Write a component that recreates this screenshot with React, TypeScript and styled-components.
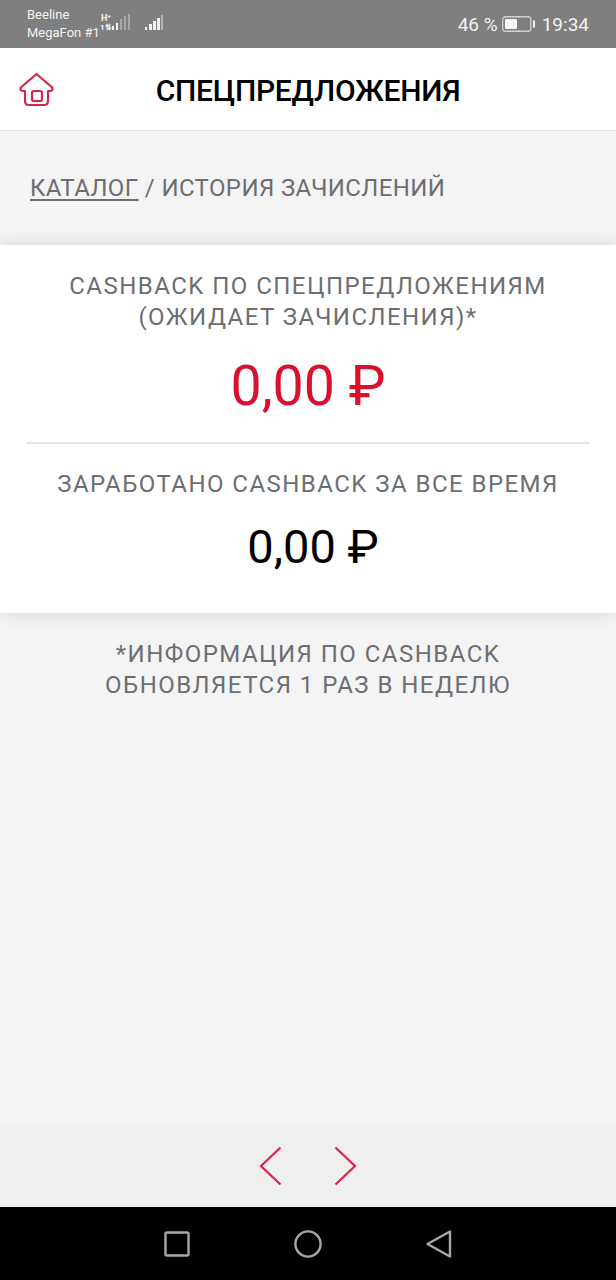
import React from "react";
import styled, { createGlobalStyle } from "styled-components";

const Global = createGlobalStyle`
  html, body { margin: 0; padding: 0; background: #f4f4f5; }
  * { box-sizing: border-box; }
`;

const Page = styled.div`
  width: 616px;
  height: 1280px;
  display: flex;
  flex-direction: column;
  font-family: Roboto, "Liberation Sans", sans-serif;
  background: #f4f4f5;
  overflow: hidden;
`;

const StatusBar = styled.div`
  height: 48px;
  flex: none;
  background: #7f7f7f;
  color: #f2f2f2;
  display: flex;
  align-items: center;
  padding: 0 27px 0 27px;
`;

const Carriers = styled.div`
  font-size: 13px;
  line-height: 18px;
  width: 73px;
  white-space: nowrap;
`;

const Signals = styled.div`
  display: flex;
  align-items: center;
  gap: 14px;
  margin-top: -2px;
`;

const StatusRight = styled.div`
  margin-left: auto;
  display: flex;
  align-items: center;
  font-size: 19px;
  color: #f2f2f2;
`;

const Battery = styled.svg`
  margin: 0 7px 0 4px;
`;

const Header = styled.header`
  height: 83px;
  flex: none;
  background: #fff;
  border-bottom: 1px solid #e6e6e6;
  position: relative;
  display: flex;
  align-items: center;
  justify-content: center;
  padding-top: 2px;
`;

const HomeIcon = styled.svg`
  position: absolute;
  left: 19px;
  top: 24px;
`;

const Title = styled.h1`
  margin: 0;
  font-size: 30px;
  font-weight: 500;
  color: #000;
  letter-spacing: -0.25px;
`;

const Breadcrumb = styled.nav`
  flex: none;
  height: 114px;
  padding: 41px 0 0 30px;
  font-size: 24px;
  line-height: 32px;
  letter-spacing: 0.39px;
  color: #6d6e71;
`;

const CrumbLink = styled.span`
  text-decoration: underline;
  text-underline-offset: 3px;
  text-decoration-thickness: 2px;
`;

const Card = styled.section`
  flex: none;
  height: 368px;
  background: #fff;
  box-shadow: 0 0 18px rgba(0, 0, 0, 0.13);
  display: flex;
  flex-direction: column;
  align-items: center;
  padding: 26px 26px 0;
`;

const Label = styled.div`
  font-size: 24px;
  line-height: 31px;
  letter-spacing: 1.46px;
  color: #6d6e71;
  text-align: center;
  white-space: nowrap;
`;

const Amount = styled.div<{ $red?: boolean; $size: number; $top: number; $shift?: number }>`
  font-size: ${(p) => p.$size}px;
  line-height: 1;
  margin-top: ${(p) => p.$top}px;
  padding-left: ${(p) => p.$shift ?? 0}px;
  color: ${(p) => (p.$red ? "#d8112f" : "#000")};
  white-space: nowrap;
`;

const Divider = styled.div`
  width: 100%;
  height: 2px;
  background: #e4e4e4;
  margin: 27px 0 25px;
`;

const Note = styled.p`
  margin: 0;
  padding-top: 26px;
  font-size: 24px;
  line-height: 31px;
  letter-spacing: 1.46px;
  color: #6d6e71;
  text-align: center;
`;

const Spacer = styled.div`
  flex: 1;
`;

const Pager = styled.div`
  height: 82px;
  flex: none;
  background: #efefef;
  display: flex;
  align-items: center;
  justify-content: center;
  gap: 50px;
`;

const NavBar = styled.div`
  height: 73px;
  flex: none;
  background: #000;
  display: flex;
  align-items: center;
  justify-content: center;
  gap: 104px;
`;

export default function App() {
  return (
    <Page>
      <Global />
      <StatusBar>
        <Carriers>
          Beeline
          <br />
          MegaFon #1
        </Carriers>
        <Signals>
          <svg width="30" height="20" viewBox="0 0 30 20">
            <g fill="#f2f2f2">
              <text x="1" y="8" fontSize="9" fontWeight="700" fontFamily="Roboto">H⁺</text>
              <text x="0" y="17" fontSize="8" fontWeight="700" fontFamily="Roboto">1⇅</text>
              <rect x="12" y="13" width="2" height="4" />
              <rect x="16" y="10" width="2" height="7" />
            </g>
            <g fill="#a9a9a9">
              <rect x="20" y="6" width="2" height="11" />
              <rect x="24" y="3" width="2" height="14" />
              <rect x="28" y="1" width="2" height="16" />
            </g>
          </svg>
          <svg width="20" height="20" viewBox="0 0 20 20">
            <g fill="#f2f2f2">
              <rect x="1" y="14" width="2" height="3" />
              <rect x="5" y="11" width="3" height="6" />
              <rect x="9" y="8" width="3" height="9" />
              <rect x="13" y="5" width="3" height="12" />
            </g>
            <rect x="17" y="2" width="2" height="15" fill="#b5b5b5" />
          </svg>
        </Signals>
        <StatusRight>
          46 %
          <Battery width="33" height="16" viewBox="0 0 33 16">
            <rect x="0.75" y="0.75" width="28" height="14.5" rx="2.5" fill="none" stroke="#cfcfcf" strokeWidth="1.3" />
            <rect x="3" y="3" width="12" height="10" rx="1" fill="#f4f4f4" />
            <rect x="31" y="4.5" width="2" height="7" fill="#f2f2f2" />
          </Battery>
          19:34
        </StatusRight>
      </StatusBar>
      <Header>
        <HomeIcon width="36" height="36" viewBox="0 0 36 36" fill="none" stroke="#d8234b" strokeWidth="2.2" strokeLinejoin="round" strokeLinecap="round">
          <path d="M1.8 15.5 L17.5 2 L33.2 15.5 Q34.5 18.8 31 19 L29 19 L29 29 Q29 33 25 33 L10 33 Q6 33 6 29 L6 19 L4 19 Q0.5 18.8 1.8 15.5 Z" />
          <rect x="13" y="19" width="10" height="10" rx="2" />
        </HomeIcon>
        <Title>СПЕЦПРЕДЛОЖЕНИЯ</Title>
      </Header>
      <Breadcrumb>
        <CrumbLink>КАТАЛОГ</CrumbLink> / ИСТОРИЯ ЗАЧИСЛЕНИЙ
      </Breadcrumb>
      <Card>
        <Label>
          CASHBACK ПО СПЕЦПРЕДЛОЖЕНИЯМ
          <br />
          (ОЖИДАЕТ ЗАЧИСЛЕНИЯ)*
        </Label>
        <Amount $red $size={55.5} $top={26}>0,00 ₽</Amount>
        <Divider />
        <Label>ЗАРАБОТАНО CASHBACK ЗА ВСЕ ВРЕМЯ</Label>
        <Amount $size={47} $top={23} $shift={10}>0,00 ₽</Amount>
      </Card>
      <Note>
        *ИНФОРМАЦИЯ ПО CASHBACK
        <br />
        ОБНОВЛЯЕТСЯ 1 РАЗ В НЕДЕЛЮ
      </Note>
      <Spacer />
      <Pager>
        <svg width="24" height="40" viewBox="0 0 24 40" fill="none" stroke="#d8234b" strokeWidth="2.2">
          <path d="M21.5 1.5 L2 20 L21.5 38.5" />
        </svg>
        <svg width="24" height="40" viewBox="0 0 24 40" fill="none" stroke="#d8234b" strokeWidth="2.2">
          <path d="M2.5 1.5 L22 20 L2.5 38.5" />
        </svg>
      </Pager>
      <NavBar>
        <svg width="26" height="26" viewBox="0 0 26 26" fill="none" stroke="#a8a8a8" strokeWidth="2.4">
          <rect x="1.5" y="1.5" width="23" height="23" rx="1.5" />
        </svg>
        <svg width="28" height="28" viewBox="0 0 28 28" fill="none" stroke="#a8a8a8" strokeWidth="2.4">
          <circle cx="14" cy="14" r="12.6" />
        </svg>
        <svg width="26" height="28" viewBox="0 0 26 28" fill="none" stroke="#a8a8a8" strokeWidth="2.4" strokeLinejoin="round">
          <path d="M24 1.5 L24 26.5 L1.5 14 Z" />
        </svg>
      </NavBar>
    </Page>
  );
}
